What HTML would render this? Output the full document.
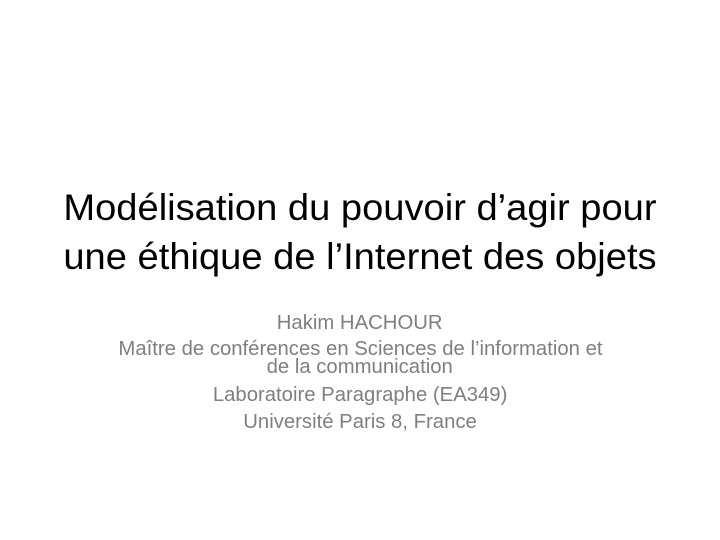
<!DOCTYPE html>
<html><head><meta charset="utf-8"><style>
html,body{margin:0;padding:0;background:#fff;width:720px;height:540px;overflow:hidden;position:relative;font-family:"Liberation Sans",sans-serif}
.l{position:absolute;left:0;width:720px;text-align:center;white-space:nowrap}
.l span{display:inline-block;transform-origin:center}
.t{font-size:37px;line-height:37px;color:#000}
.t span{transform:scaleX(1.03)}
.s{font-size:20px;line-height:20px;color:#7f7f7f}
.s span{transform:scaleX(1.015)}
</style></head><body>
<div class="l t" style="top:189px"><span>Modélisation du pouvoir d’agir pour</span></div>
<div class="l t" style="top:238px"><span>une éthique de l’Internet des objets</span></div>
<div class="l s" style="top:313px"><span>Hakim HACHOUR</span></div>
<div class="l s" style="top:339px"><span>Maître de conférences en Sciences de l’information et</span></div>
<div class="l s" style="top:357px"><span>de la communication</span></div>
<div class="l s" style="top:385px"><span>Laboratoire Paragraphe (EA349)</span></div>
<div class="l s" style="top:412px"><span>Université Paris 8, France</span></div>
</body></html>
